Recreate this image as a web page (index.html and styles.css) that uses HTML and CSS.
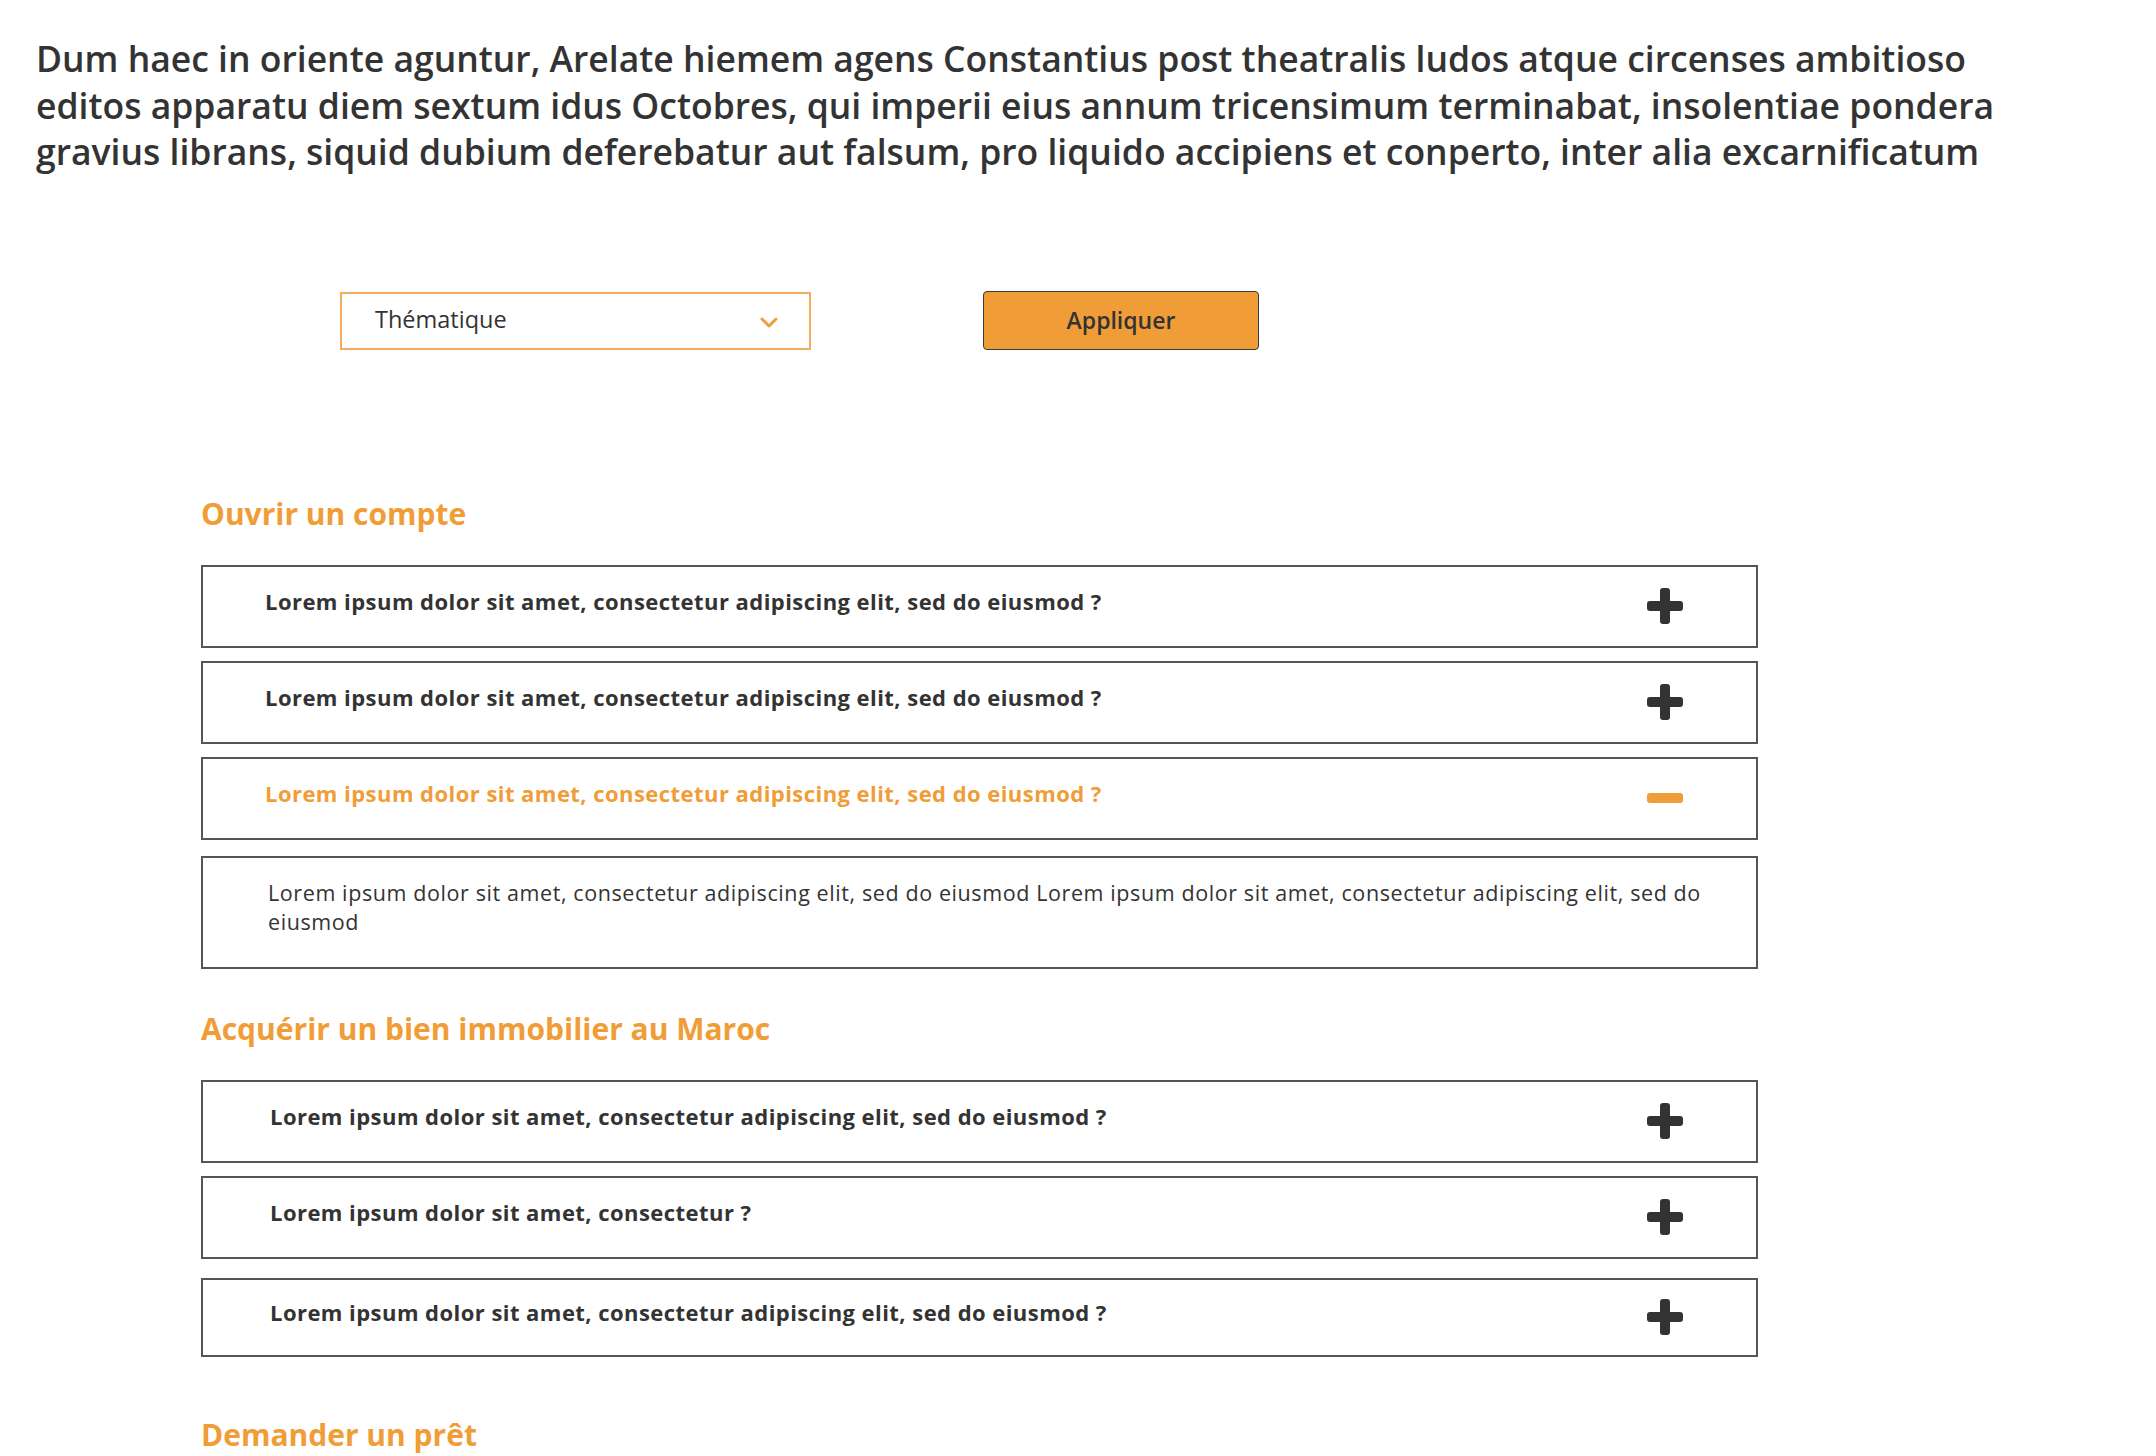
FILE: index.html
```html
<!DOCTYPE html>
<html lang="fr">
<head>
<meta charset="utf-8">
<title>FAQ</title>
<link rel="stylesheet" href="styles.css">
</head>
<body>
<main class="page">
  <p class="intro">Dum haec in oriente aguntur, Arelate hiemem agens Constantius post theatralis ludos atque circenses ambitioso editos apparatu diem sextum idus Octobres, qui imperii eius annum tricensimum terminabat, insolentiae pondera gravius librans, siquid dubium deferebatur aut falsum, pro liquido accipiens et conperto, inter alia excarnificatum</p>

  <div class="filters">
    <div class="select">
      <span class="select-label">Thématique</span>
      <svg class="chevron" width="18" height="11" viewBox="0 0 18 11"><path d="M2 2 L9 9 L16 2" fill="none" stroke="#f09d38" stroke-width="3" stroke-linecap="round" stroke-linejoin="round"/></svg>
    </div>
    <button class="apply">Appliquer</button>
  </div>

  <section class="faq">
    <h2 class="faq-title">Ouvrir un compte</h2>
    <div class="faq-list">
      <div class="q">
        <span class="q-text">Lorem ipsum dolor sit amet, consectetur adipiscing elit, sed do eiusmod ?</span>
        <svg class="icon" width="36" height="36" viewBox="0 0 36 36"><rect x="0" y="13" width="36" height="10" rx="3" fill="#333"/><rect x="13" y="0" width="10" height="36" rx="3" fill="#333"/></svg>
      </div>
      <div class="q">
        <span class="q-text">Lorem ipsum dolor sit amet, consectetur adipiscing elit, sed do eiusmod ?</span>
        <svg class="icon" width="36" height="36" viewBox="0 0 36 36"><rect x="0" y="13" width="36" height="10" rx="3" fill="#333"/><rect x="13" y="0" width="10" height="36" rx="3" fill="#333"/></svg>
      </div>
      <div class="q q-open">
        <span class="q-text">Lorem ipsum dolor sit amet, consectetur adipiscing elit, sed do eiusmod ?</span>
        <svg class="icon icon-minus" width="36" height="36" viewBox="0 0 36 36"><rect x="0" y="13" width="36" height="10" rx="3" fill="#f09d38"/></svg>
      </div>
      <div class="answer">Lorem ipsum dolor sit amet, consectetur adipiscing elit, sed do eiusmod Lorem ipsum dolor sit amet, consectetur adipiscing elit, sed do eiusmod</div>
    </div>
  </section>

  <section class="faq">
    <h2 class="faq-title">Acquérir un bien immobilier au Maroc</h2>
    <div class="faq-list faq-list-alt">
      <div class="q">
        <span class="q-text">Lorem ipsum dolor sit amet, consectetur adipiscing elit, sed do eiusmod ?</span>
        <svg class="icon" width="36" height="36" viewBox="0 0 36 36"><rect x="0" y="13" width="36" height="10" rx="3" fill="#333"/><rect x="13" y="0" width="10" height="36" rx="3" fill="#333"/></svg>
      </div>
      <div class="q">
        <span class="q-text">Lorem ipsum dolor sit amet, consectetur ?</span>
        <svg class="icon" width="36" height="36" viewBox="0 0 36 36"><rect x="0" y="13" width="36" height="10" rx="3" fill="#333"/><rect x="13" y="0" width="10" height="36" rx="3" fill="#333"/></svg>
      </div>
      <div class="q q-short q-spaced">
        <span class="q-text">Lorem ipsum dolor sit amet, consectetur adipiscing elit, sed do eiusmod ?</span>
        <svg class="icon" width="36" height="36" viewBox="0 0 36 36"><rect x="0" y="13" width="36" height="10" rx="3" fill="#333"/><rect x="13" y="0" width="10" height="36" rx="3" fill="#333"/></svg>
      </div>
    </div>
  </section>

  <section class="faq faq-last">
    <h2 class="faq-title">Demander un prêt</h2>
  </section>
</main>
</body>
</html>
```

FILE: styles.css
```css
* { box-sizing: border-box; }

body {
  margin: 0;
  background: #fff;
  color: #333;
  font-family: "Open Sans", "Noto Sans", sans-serif;
}

.page {
  padding-top: 35px;
}

.intro {
  margin: 0 100px 0 36px;
  font-size: 35.5px;
  font-weight: 600;
  letter-spacing: 0;
  line-height: 46.5px;
  color: #333;
}

.filters {
  display: flex;
  align-items: flex-end;
  gap: 172px;
  margin: 116px 0 0 340px;
}

.select {
  width: 471px;
  height: 58px;
  border: 2px solid #f3ac5e;
  display: flex;
  align-items: center;
  justify-content: space-between;
  padding: 0 31px 0 33px;
}

.select-label {
  font-size: 23.5px;
  color: #333;
  padding-bottom: 4px;
}

.chevron {
  display: block;
  margin-top: 4px;
}

.apply {
  width: 276px;
  height: 59px;
  background: #f09d38;
  border: 1px solid #3a3a3a;
  border-radius: 4px;
  font-family: "Open Sans", "Noto Sans", sans-serif;
  font-size: 23px;
  font-weight: 600;
  color: #333;
  padding: 0;
}

.faq {
  margin: 144px 0 0 201px;
  width: 1557px;
}

.faq + .faq {
  margin-top: 40px;
}

.faq.faq-last {
  margin-top: 58px;
}

.faq-title {
  margin: 0 0 31px;
  font-size: 30px;
  line-height: 40px;
  font-weight: 700;
  color: #f09d38;
}

.faq-list {
  display: flex;
  flex-direction: column;
  gap: 13px;
}

.q {
  height: 83px;
  border: 2px solid #555;
  display: flex;
  align-items: center;
  justify-content: space-between;
  padding: 0 73px 0 62px;
}

.q-text {
  font-size: 22px;
  font-weight: 700;
  letter-spacing: 0.45px;
  color: #333;
  padding-bottom: 10px;
}

.faq-list-alt .q {
  padding-left: 67px;
}

.q-open .q-text {
  color: #f09d38;
}

.q-short {
  height: 79px;
}

.q-spaced {
  margin-top: 6px;
}

.icon {
  display: block;
  flex: none;
}

.answer {
  margin-top: 3px;
  border: 2px solid #555;
  min-height: 113px;
  padding: 20px 40px 20px 65px;
  font-size: 21.5px;
  letter-spacing: 0.6px;
  line-height: 29px;
  color: #333;
}
```
